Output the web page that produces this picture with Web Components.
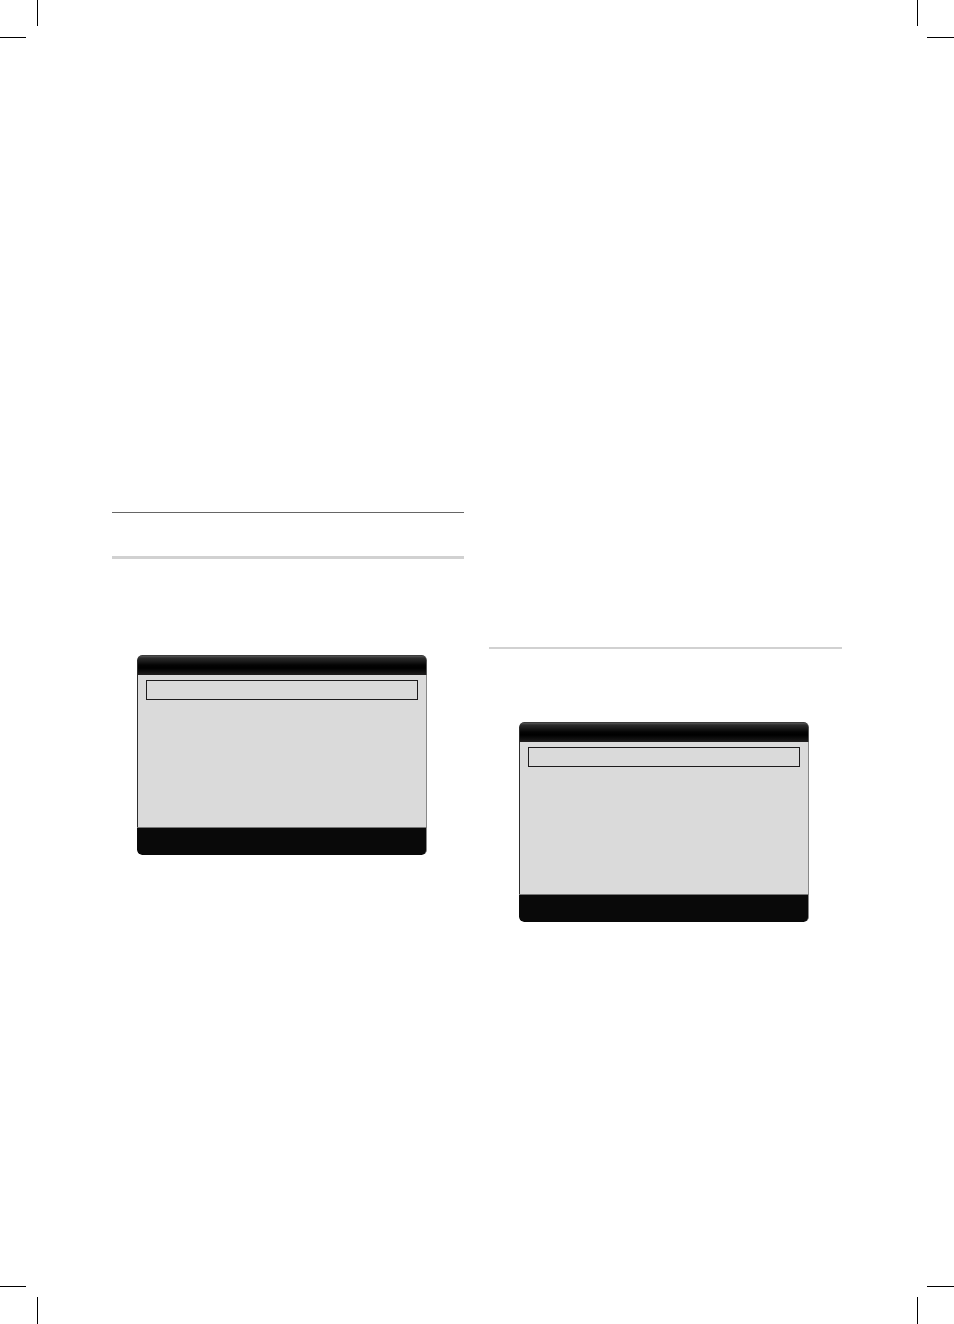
<!DOCTYPE html>
<html lang="en">
<head>
<meta charset="utf-8">
<meta name="viewport" content="width=device-width, initial-scale=1">
<title>Manual page</title>
<style>
body{
	margin: 0;
	background-color: #fff;
	font-family: "Liberation Sans", sans-serif;
}
.first-rule{
	margin-top: 474px;
}
.second-rule{
	margin-top: 43px;
}
.first-screen{
	margin: 96px 37px 0 25px;
}
.right-rule{
	margin-top: 609px;
}
.right-screen{
	margin: 73px 33px 0 30px;
}
</style>
</head>
<body>
<manual-page>
	<section-rule class="first-rule" slot="left" kind="title"></section-rule>
	<section-rule class="second-rule" slot="left" kind="heavy"></section-rule>
	<menu-screen class="first-screen" slot="left"></menu-screen>
	<section-rule class="right-rule" slot="right"></section-rule>
	<menu-screen class="right-screen" slot="right"></menu-screen>
</manual-page>

<script>
class BaseElement extends HTMLElement {

	constructor() {
		super();
		const template = document.createElement('template');
		template.innerHTML = this.constructor.styles + this.constructor.markup;

		this.attachShadow({ mode: 'open' });
		this.shadowRoot.appendChild(template.content.cloneNode(true));
	}
}

class CropMark extends BaseElement {

	static get styles() {
		return `
		<style>
		:host{
			display: block;
			height: 38px;
		}
		svg{
			display: block;
		}
		path{
			fill: #000;
		}
		</style>
		`
	}

	static get markup() {
		return `
		<svg height="38" aria-hidden="true"><path></path></svg>
		`
	}

	// one thin bar on each axis, kept clear of the trim corner
	static get corners() {
		return {
			'top-left': { width: 38, path: 'M37 0h1v26h-1zM0 37h26v1H0z' },
			'top-right': { width: 37, path: 'M0 0h1v26H0zM10 37h27v1H10z' },
			'bottom-left': { width: 38, path: 'M0 0h26v1H0zM37 11h1v27h-1z' },
			'bottom-right': { width: 37, path: 'M10 0h27v1H10zM0 11h1v27H0z' }
		};
	}

	connectedCallback() {
		const corner = CropMark.corners[this.getAttribute('corner')];
		this.shadowRoot.querySelector('svg').setAttribute('width', corner.width);
		this.shadowRoot.querySelector('path').setAttribute('d', corner.path);
	}
}

class SectionRule extends BaseElement {

	static get styles() {
		return `
		<style>
		:host{
			display: block;
		}
		hr{
			height: 2px;
			margin: 0;
			border: 0;
			background-color: #d1d1d1;
		}
		:host([kind="title"]) hr{
			height: 1px;
			background-color: #666;
		}
		:host([kind="heavy"]) hr{
			height: 3px;
		}
		</style>
		`
	}

	static get markup() {
		return `
		<hr>
		`
	}
}

class MenuScreen extends BaseElement {

	static get styles() {
		return `
		<style>
		:host{
			display: block;
		}
		.screen{
			display: flex;
			flex-direction: column;
			border-radius: 5px;
			overflow: hidden;
		}
		.title{
			box-sizing: border-box;
			height: 20px;
			border-top: 1px solid #3c3c3c;
			border-left: 1px solid #2a2a2a;
			border-right: 1px solid #555;
			border-radius: 5px 5px 0 0;
			background: linear-gradient(#555 0, #2c2c2c 2px, #1c1c1c 5px, #040404 9px, #000 12px, #0c0c0c 15px, #1f1d1d 19px);
		}
		.content{
			min-height: 142px;
			padding: 5px 8px;
			border-left: 1px solid #2c2c2c;
			border-right: 1px solid #888;
			background-color: #dadada;
		}
		.selected{
			box-sizing: border-box;
			height: 20px;
			border: 1px solid #1c1a1b;
		}
		.footer{
			box-sizing: border-box;
			height: 28px;
			border-top: 1px solid #777;
			border-right: 1px solid #888;
			border-radius: 0 0 5px 5px;
			background-color: #090909;
		}
		</style>
		`
	}

	static get markup() {
		return `
		<div class="screen">
			<div class="title"></div>
			<div class="content">
				<div class="selected"></div>
			</div>
			<div class="footer"></div>
		</div>
		`
	}
}

class ManualPage extends BaseElement {

	static get styles() {
		return `
		<style>
		:host{
			display: flex;
			flex-direction: column;
			min-height: 100vh;
		}
		.marks{
			display: flex;
			justify-content: space-between;
		}
		.columns{
			flex: 1;
			display: grid;
			grid-template-columns: 352fr 353fr;
			column-gap: 25px;
			padding: 0 112px;
		}
		.column{
			display: flex;
			flex-direction: column;
		}
		</style>
		`
	}

	static get markup() {
		return `
		<div class="marks">
			<crop-mark corner="top-left"></crop-mark>
			<crop-mark corner="top-right"></crop-mark>
		</div>
		<main class="columns">
			<div class="column"><slot name="left"></slot></div>
			<div class="column"><slot name="right"></slot></div>
		</main>
		<div class="marks">
			<crop-mark corner="bottom-left"></crop-mark>
			<crop-mark corner="bottom-right"></crop-mark>
		</div>
		`
	}
}

customElements.define('crop-mark', CropMark);
customElements.define('section-rule', SectionRule);
customElements.define('menu-screen', MenuScreen);
customElements.define('manual-page', ManualPage);
</script>
</body>
</html>
